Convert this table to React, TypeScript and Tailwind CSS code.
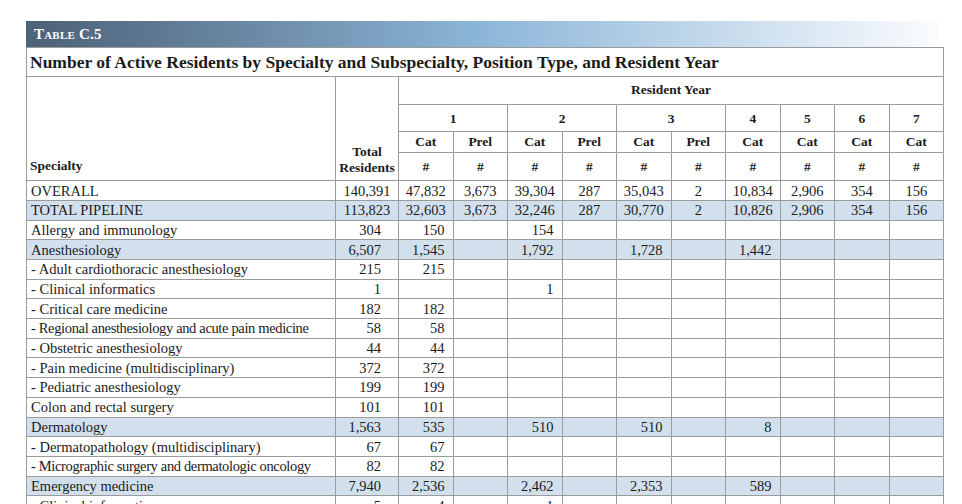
type Row = {
	name: string;
	vals: string[];
	shaded?: boolean;
	centered?: boolean;
	tight?: boolean;
};

const rows: Row[] = [
	{ name: "OVERALL", vals: ["140,391", "47,832", "3,673", "39,304", "287", "35,043", "2", "10,834", "2,906", "354", "156"], centered: true },
	{ name: "TOTAL PIPELINE", vals: ["113,823", "32,603", "3,673", "32,246", "287", "30,770", "2", "10,826", "2,906", "354", "156"], shaded: true, centered: true },
	{ name: "Allergy and immunology", vals: ["304", "150", "", "154", "", "", "", "", "", "", ""] },
	{ name: "Anesthesiology", vals: ["6,507", "1,545", "", "1,792", "", "1,728", "", "1,442", "", "", ""], shaded: true },
	{ name: "- Adult cardiothoracic anesthesiology", vals: ["215", "215", "", "", "", "", "", "", "", "", ""] },
	{ name: "- Clinical informatics", vals: ["1", "", "", "1", "", "", "", "", "", "", ""] },
	{ name: "- Critical care medicine", vals: ["182", "182", "", "", "", "", "", "", "", "", ""] },
	{ name: "- Regional anesthesiology and acute pain medicine", vals: ["58", "58", "", "", "", "", "", "", "", "", ""], tight: true },
	{ name: "- Obstetric anesthesiology", vals: ["44", "44", "", "", "", "", "", "", "", "", ""] },
	{ name: "- Pain medicine (multidisciplinary)", vals: ["372", "372", "", "", "", "", "", "", "", "", ""] },
	{ name: "- Pediatric anesthesiology", vals: ["199", "199", "", "", "", "", "", "", "", "", ""] },
	{ name: "Colon and rectal surgery", vals: ["101", "101", "", "", "", "", "", "", "", "", ""] },
	{ name: "Dermatology", vals: ["1,563", "535", "", "510", "", "510", "", "8", "", "", ""], shaded: true },
	{ name: "- Dermatopathology (multidisciplinary)", vals: ["67", "67", "", "", "", "", "", "", "", "", ""] },
	{ name: "- Micrographic surgery and dermatologic oncology", vals: ["82", "82", "", "", "", "", "", "", "", "", ""], tight: true },
	{ name: "Emergency medicine", vals: ["7,940", "2,536", "", "2,462", "", "2,353", "", "589", "", "", ""], shaded: true },
	{ name: "- Clinical informatics", vals: ["5", "4", "", "1", "", "", "", "", "", "", ""] },
];

const th = "border border-[#9b9b9b] font-bold text-center align-middle";

export default function App() {
	return (
		<div className="h-[504px] w-[962px] overflow-hidden bg-white pt-[21px] pl-[26px] font-['Liberation_Serif',serif] text-[#1b1b1b]">
			<div className="flex h-[26px] w-[912px] items-center bg-gradient-to-r from-[#4d6177] via-[#8cb6d8] to-[#fbfcfe] pl-[8px]">
				<span className="text-[15px] font-bold tracking-[0.2px] text-white [font-variant:small-caps]">
					Table C.5
				</span>
			</div>
			<table className="w-[917px] table-fixed border-collapse">
				<colgroup>
					<col className="w-[309px]" />
					<col className="w-[63px]" />
					{Array.from({ length: 10 }).map((_, i) => (
						<col key={i} className="w-[54.5px]" />
					))}
				</colgroup>
				<thead>
					<tr className="h-[29px]">
						<th colSpan={12} className="border border-[#9b9b9b] pl-[3px] text-left align-middle text-[17.5px] font-bold">
							Number of Active Residents by Specialty and Subspecialty, Position Type, and Resident Year
						</th>
					</tr>
					<tr className="h-[28px] text-[13.5px]">
						<th rowSpan={4} className="border border-[#9b9b9b] pb-[4px] pl-[3px] text-left align-bottom font-bold">
							Specialty
						</th>
						<th rowSpan={4} className="border border-[#9b9b9b] pb-[4px] text-center align-bottom font-bold leading-[16px]">
							Total
							<br />
							Residents
						</th>
						<th colSpan={10} className={th}>
							Resident Year
						</th>
					</tr>
					<tr className="h-[27px] text-[13.5px]">
						<th colSpan={2} className={`${th} pt-[3px]`}>1</th>
						<th colSpan={2} className={`${th} pt-[3px]`}>2</th>
						<th colSpan={2} className={`${th} pt-[3px]`}>3</th>
						<th className={`${th} pt-[3px]`}>4</th>
						<th className={`${th} pt-[3px]`}>5</th>
						<th className={`${th} pt-[3px]`}>6</th>
						<th className={`${th} pt-[3px]`}>7</th>
					</tr>
					<tr className="h-[20px] text-[13.5px]">
						{["Cat", "Prel", "Cat", "Prel", "Cat", "Prel", "Cat", "Cat", "Cat", "Cat"].map((c, i) => (
							<th key={i} className={th}>
								{c}
							</th>
						))}
					</tr>
					<tr className="h-[28px] text-[13.5px]">
						{Array.from({ length: 10 }).map((_, i) => (
							<th key={i} className={th}>
								#
							</th>
						))}
					</tr>
				</thead>
				<tbody className="text-[14.5px] leading-[16px]">
					{rows.map((r, ri) => (
						<tr key={ri} className={`h-[19.7px] ${r.shaded ? "bg-[#d2e0ee]" : "bg-white"}`}>
							<td className={`border border-[#9b9b9b] pl-[4px] align-middle whitespace-nowrap ${r.tight ? "tracking-[-0.35px]" : ""}`}>
								{r.name}
							</td>
							{r.vals.map((v, vi) => (
								<td
									key={vi}
									className={`border border-[#9b9b9b] align-middle whitespace-nowrap ${
										r.centered
											? "text-center"
											: vi === 0
												? "pr-[17px] text-right"
												: "pr-[8px] text-right"
									}`}
								>
									{v}
								</td>
							))}
						</tr>
					))}
				</tbody>
			</table>
		</div>
	);
}
